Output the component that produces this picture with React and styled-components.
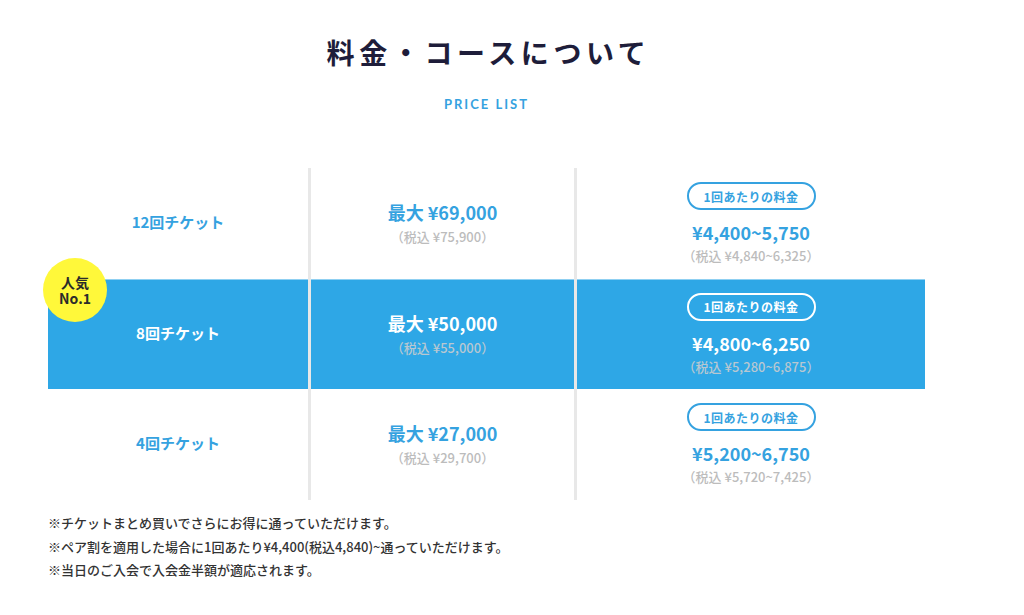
import React from "react";
import styled, { createGlobalStyle } from "styled-components";

const Global = createGlobalStyle`
  html, body { margin: 0; padding: 0; background: #fff; }
  body { font-family: "Noto Sans CJK JP", "Noto Sans", sans-serif; }
`;

const BLUE = "#2ea7e6";
const TEXT_BLUE = "#35a2e0";

const Page = styled.div`
  width: 877px;
  margin-left: 48px;
  padding-top: 33px;
`;

const Title = styled.h2`
  margin: 0;
  text-align: center;
  font-size: 28px;
  line-height: 39px;
  font-weight: 700;
  letter-spacing: 4.6px;
  color: #1e1d3a;
  padding-left: 4px;
`;

const Sub = styled.div`
  margin-top: 22px;
  text-align: center;
  font-family: "Lato", "Noto Sans", sans-serif;
  font-size: 13px;
  line-height: 20px;
  font-weight: 700;
  letter-spacing: 2px;
  color: ${TEXT_BLUE};
`;

const Table = styled.div`
  margin-top: 54px;
  display: flex;
  flex-direction: column;
`;

const Row = styled.div`
  position: relative;
  display: grid;
  grid-template-columns: 260px 263px 348px;
  column-gap: 3px;
  background: #e8e8e8;
  height: ${(p) => p.$h}px;
`;

const Cell = styled.div`
  display: flex;
  flex-direction: column;
  align-items: center;
  justify-content: center;
  background: ${(p) => (p.$featured ? BLUE : "#fff")};
  color: ${(p) => (p.$featured ? "#fff" : TEXT_BLUE)};
  box-shadow: ${(p) => (p.$featured ? "inset 0 1px 0 #8fd0f2" : "none")};
`;

const Name = styled.div`
  font-size: 15px;
  font-weight: 700;
  line-height: 22px;
  margin-top: -3px;
`;

const Price = styled.div`
  font-size: 18px;
  font-weight: 700;
  line-height: 23px;
`;

const Tax = styled.div`
  font-size: 13px;
  line-height: 18px;
  font-weight: 500;
  color: ${(p) => (p.$featured ? "#b9c7d1" : "#bcbcbc")};
  margin-top: ${(p) => p.$mt}px;
`;

const Pill = styled.div`
  box-sizing: border-box;
  width: 129px;
  height: 28px;
  border-radius: 14px;
  border: 2.5px solid ${(p) => (p.$featured ? "#fff" : TEXT_BLUE)};
  display: flex;
  align-items: center;
  justify-content: center;
  font-size: 12px;
  font-weight: 700;
  margin-bottom: 11px;
  letter-spacing: 0.5px;
`;

const Popular = styled.div`
  position: absolute;
  left: -5px;
  top: -21px;
  width: 64px;
  height: 64px;
  border-radius: 50%;
  background: #fff83a;
  color: #2b2b2b;
  display: flex;
  align-items: center;
  justify-content: center;
  text-align: center;
  font-size: 14px;
  font-weight: 700;
  line-height: 16px;
  z-index: 2;
`;

const Notes = styled.div`
  margin-top: 11px;
  font-size: 13px;
  line-height: 23.5px;
  font-weight: 500;
  color: #333;
`;

const rows = [
  { name: "12回チケット", max: "¥69,000", maxTax: "¥75,900", per: "¥4,400~5,750", perTax: "¥4,840~6,325", h: 111 },
  { name: "8回チケット", max: "¥50,000", maxTax: "¥55,000", per: "¥4,800~6,250", perTax: "¥5,280~6,875", h: 110, featured: true },
  { name: "4回チケット", max: "¥27,000", maxTax: "¥29,700", per: "¥5,200~6,750", perTax: "¥5,720~7,425", h: 111 },
];

export default function App() {
  return (
    <Page>
      <Global />
      <Title>料金・コースについて</Title>
      <Sub>PRICE LIST</Sub>
      <Table>
        {rows.map((r) => (
          <Row key={r.name} $h={r.h}>
            {r.featured && (
              <Popular>
                人気
                <br />
                No.1
              </Popular>
            )}
            <Cell $featured={r.featured}>
              <Name>{r.name}</Name>
            </Cell>
            <Cell $featured={r.featured}>
              <Price>最大 {r.max}</Price>
              <Tax $featured={r.featured} $mt={4}>（税込 {r.maxTax}）</Tax>
            </Cell>
            <Cell $featured={r.featured}>
              <Pill $featured={r.featured}>1回あたりの料金</Pill>
              <Price>{r.per}</Price>
              <Tax $featured={r.featured} $mt={3}>（税込 {r.perTax}）</Tax>
            </Cell>
          </Row>
        ))}
      </Table>
      <Notes>
        <div>※チケットまとめ買いでさらにお得に通っていただけます。</div>
        <div>※ペア割を適用した場合に1回あたり¥4,400(税込4,840)~通っていただけます。</div>
        <div>※当日のご入会で入会金半額が適応されます。</div>
      </Notes>
    </Page>
  );
}
